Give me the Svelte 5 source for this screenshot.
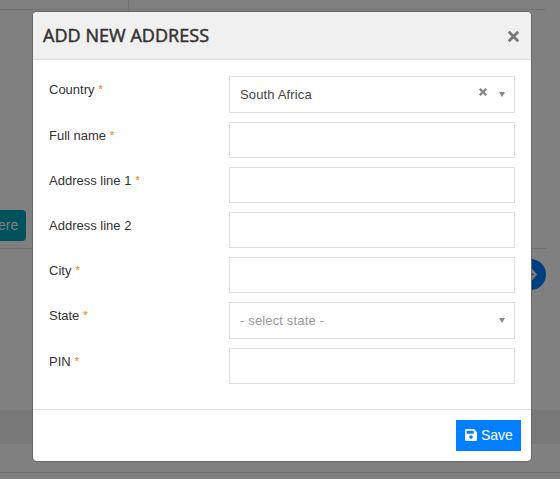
<script>
  const fields = [
    { label: 'Country', required: true, kind: 'select', value: 'South Africa', clearable: true },
    { label: 'Full name', required: true, kind: 'text' },
    { label: 'Address line 1', required: true, kind: 'text' },
    { label: 'Address line 2', required: false, kind: 'text' },
    { label: 'City', required: true, kind: 'text' },
    { label: 'State', required: true, kind: 'select', placeholder: '- select state -' },
    { label: 'PIN', required: true, kind: 'text' }
  ];
</script>

<div class="screen">
  <div class="page" aria-hidden="true">
    <div class="tabs"><i></i></div>
    <div class="content">
      <div class="heading"><i></i></div>
      <div class="cta"><span>ere</span></div>
    </div>
    <div class="next">
      <div class="circle">
        <svg width="31" height="31" viewBox="0 0 31 31"><path d="M13 13.500h6M13 17.500h6M16.500 10.800L20.500 15.500l-4 4.700" fill="none" stroke="#808080" stroke-width="2.300" /></svg>
      </div>
    </div>
    <div class="band"></div>
    <div class="bottom"></div>
  </div>

  <div class="modal" role="dialog" aria-label="Add new address">
    <header>
      <h4>ADD NEW ADDRESS</h4>
      <button class="close" aria-label="Close">
        <svg width="13" height="13" viewBox="0 0 13 13"><path d="M1.800 1.800l9.400 9.400M11.200 1.800l-9.400 9.400" stroke="#777" stroke-width="2.800" /></svg>
      </button>
    </header>

    <div class="body">
      {#each fields as f}
        <div class="row">
          <div class="label">{f.label}{#if f.required}<span class="star">*</span>{/if}</div>
          {#if f.kind === 'select'}
            <div class="control select">
              <span class="value" class:muted={!f.value}>{f.value ?? f.placeholder}</span>
              {#if f.clearable}
                <svg class="clear" width="8" height="8" viewBox="0 0 8 8"><path d="M.8.8l6.400 6.400M7.200.8L.8 7.200" stroke="#888" stroke-width="2.300" /></svg>
              {/if}
              <svg class="caret" width="6" height="5" viewBox="0 0 6 5"><path d="M0 0h6L3 5z" fill="#888" /></svg>
            </div>
          {:else}
            <input class="control" type="text" aria-label={f.label} />
          {/if}
        </div>
      {/each}
    </div>

    <footer>
      <button class="save">
        <svg width="12" height="12" viewBox="0 0 12 12"><path fill="#fff" fill-rule="evenodd" d="M1.300 0H9l3 3v7.700c0 .7-.6 1.300-1.300 1.300H1.300C.6 12 0 11.400 0 10.700V1.300C0 .6.6 0 1.300 0zM1.700 1.700v3h7v-3zM6 6.300a1.800 1.800 0 1 0 0 3.600 1.800 1.800 0 0 0 0-3.600z" /></svg>
        <span>Save</span>
      </button>
    </footer>
  </div>
</div>

<style>
  .screen {
    position: relative;
    width: 560px;
    height: 479px;
    overflow: hidden;
    background: #808080;
    font-family: "Liberation Sans", Arial, sans-serif;
    font-size: 13px;
    color: #333;
  }
  .page { display: flex; flex-direction: column; height: 479px; }
  .tabs { height: 9px; width: 546px; border-bottom: 1px solid #737373; }
  .tabs i { display: block; width: 128px; height: 9px; border-right: 1px solid #737373; }
  .content {
    box-sizing: border-box;
    width: 546px;
    height: 239px;
    border-bottom: 1px solid #707070;
    display: flex;
    flex-direction: column;
    justify-content: space-between;
    padding-bottom: 7px;
  }
  .heading { display: flex; justify-content: space-between; height: 24px; }
  .heading::before { content: ""; width: 128px; height: 6px; border-right: 1px solid #737373; }
  .heading i { width: 4px; height: 3px; margin: 20px 14px 0 0; border-radius: 2px; background: #111; flex: none; }
  .cta {
    width: 26px;
    height: 31px;
    background: #00525c;
    border-radius: 0 4px 4px 0;
    color: #808080;
    font-size: 14px;
    line-height: 31px;
  }
  .cta span { margin-left: -2px; }
  .next { height: 161px; width: 546px; display: flex; justify-content: flex-end; padding-top: 10px; box-sizing: border-box; }
  .circle { width: 31px; height: 31px; border-radius: 50%; background: #004080; }
  .circle svg { display: block; }
  .band { height: 34px; background: #797979; }
  .bottom { height: 28px; border-bottom: 1px solid #737373; }

  .modal {
    position: absolute;
    left: 33px;
    top: 12px;
    width: 498px;
    height: 449px;
    display: flex;
    flex-direction: column;
    background: #fff;
    border-radius: 4px;
    box-shadow: 0 0 0 1px #666;
    overflow: hidden;
  }
  header {
    box-sizing: border-box;
    height: 48px;
    flex: none;
    display: flex;
    align-items: center;
    justify-content: space-between;
    padding: 0 11px 0 10px;
    background: #f0f0f0;
    border-bottom: 1px solid #dedede;
  }
  h4 {
    margin: -2px 0 0;
    font: 400 18px/24px "Open Sans", sans-serif;
    letter-spacing: 0.05px;
    -webkit-text-stroke: 0.5px #333;
    white-space: nowrap;
  }
  button { border: 0; padding: 0; background: none; font: inherit; }
  .close { display: flex; padding-top: 2px; }
  .body { flex: 1; padding: 16px 16px 0; }
  .row { display: flex; margin-bottom: 9px; }
  .label { width: 180px; flex: none; padding-top: 5px; line-height: 18px; }
  .star { color: #ff8c1a; font-size: 11px; margin-left: 4px; position: relative; top: -1px; line-height: 10px; -webkit-text-stroke: 0.2px #ff8c1a; }
  .control {
    box-sizing: border-box;
    width: 286px;
    height: 36px;
    margin: 0;
    border: 1px solid #ddd;
    border-radius: 0;
    background: #fff;
    outline: none;
  }
  .select { height: 37px; display: flex; align-items: center; padding: 0 9px 0 10px; }
  .value { flex: 1; color: #444; padding-bottom: 1px; letter-spacing: 0.15px; }
  .muted { color: #999; }
  .clear { margin: 0 12px 5px 0; }
  .caret { margin-top: -1px; }
  footer {
    box-sizing: border-box;
    height: 52px;
    flex: none;
    display: flex;
    justify-content: flex-end;
    padding: 10px 10px 0 0;
    border-top: 1px solid #dedede;
  }
  .save {
    width: 65px;
    height: 31px;
    display: flex;
    align-items: center;
    padding: 0 0 2px 9px;
    gap: 4px;
    background: #0080ff;
    color: #fff;
    font-size: 14px;
  }
</style>
